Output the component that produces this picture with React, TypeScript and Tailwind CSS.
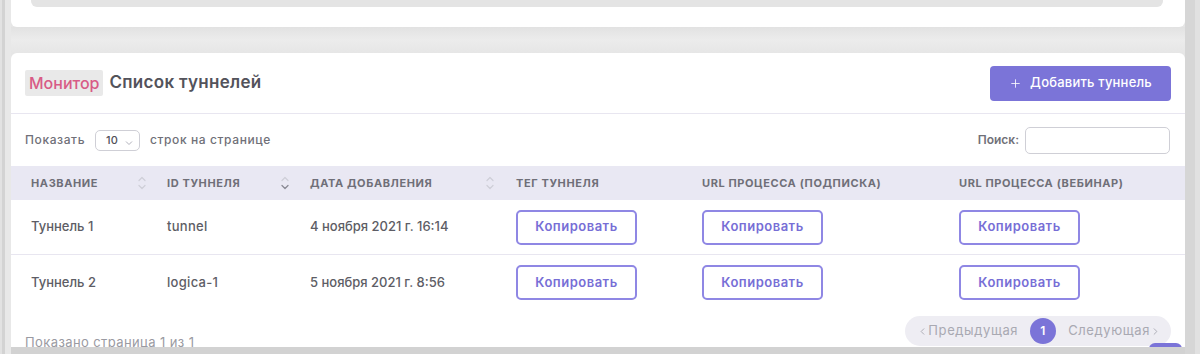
import { Plus, ChevronLeft, ChevronRight } from 'lucide-react';

const rows = [
  { name: 'Туннель 1', id: 'tunnel', date: '4 ноября 2021 г. 16:14' },
  { name: 'Туннель 2', id: 'logica-1', date: '5 ноября 2021 г. 8:56' },
];

const cols = 'grid grid-cols-[145px_143px_206px_186px_257px_237px]';

function SortIcon({ active }: { active?: 'up' | 'down' }) {
  return (
    <svg width="10" height="16" viewBox="0 0 10 16" fill="none" className="shrink-0">
      <path d="M2 5.5 L5 2.5 L8 5.5" stroke={active === 'up' ? '#8a8a94' : '#cfcfd8'} strokeWidth="1.3" strokeLinecap="round" strokeLinejoin="round" />
      <path d="M2 10.5 L5 13.5 L8 10.5" stroke={active === 'down' ? '#8a8a94' : '#cfcfd8'} strokeWidth="1.3" strokeLinecap="round" strokeLinejoin="round" />
    </svg>
  );
}

function CopyButton() {
  return (
    <button className="w-[121px] h-[35px] rounded-[5px] border-2 border-[#8f87e4] bg-white text-[13px] font-semibold tracking-[0.5px] text-[#776ed6]">
      Копировать
    </button>
  );
}

export default function App() {
  return (
    <div className="flex h-[354px] w-[1200px] overflow-hidden bg-[#e6e6e6] font-['Inter','Noto_Sans',sans-serif]">
      {/* left edge */}
      <div className="flex w-[11px] shrink-0">
        <div className="w-[2px] bg-[#e2e2e2]" />
        <div className="w-[3px] bg-[#d3d3d3]" />
        <div className="flex-1 bg-[#e8e8e8]" />
      </div>

      <div className="flex w-[1174px] shrink-0 flex-col">
        {/* top card */}
        <div className="h-[27px] shrink-0 rounded-b-[6px] bg-white px-[20px]">
          <div className="h-[7px] rounded-b-[6px] bg-[#e4e4e4] mr-[2px]" />
        </div>

        <div className="h-[26px] shrink-0 bg-gradient-to-b from-[#e2e2e2] via-[#ececec] to-[#e6e6e6]" />

        {/* main card */}
        <div className="relative h-[294px] shrink-0 overflow-hidden rounded-t-[6px] bg-white">
          <div className="flex h-[61px] items-center justify-between border-b border-[#e8e6f0] pl-[14px] pr-[14px]">
            <div className="flex items-center gap-[6px]">
              <span className="rounded-[2px] bg-[#e9e9e9] px-[4px] py-[1px] text-[16px] font-medium text-[#d85b86]">Монитор</span>
              <span className="text-[17px] font-semibold tracking-[0.3px] text-[#53535b]">Список туннелей</span>
            </div>
            <button className="flex h-[35px] w-[181px] items-center justify-center gap-[8px] rounded-[4px] bg-[#7b74d8] text-[13px] font-medium tracking-[0.2px] text-white">
              <Plus size={13} strokeWidth={1.5} />
              Добавить туннель
            </button>
          </div>

          <div className="flex h-[52px] items-center justify-between pl-[14px] pr-[15px]">
            <div className="flex items-center text-[12px] font-medium tracking-[0.6px] text-[#707078]">
              <span>Показать</span>
              <div className="ml-[10px] mr-[10px] flex h-[21px] w-[45px] items-center justify-between rounded-[5px] border border-[#cfcfd6] pl-[10px] pr-[6px] text-[11px] tracking-normal text-[#505058]">
                <span>10</span>
                <svg width="8" height="6" viewBox="0 0 8 6" className="mt-[6px]">
                  <path d="M1 1.5 L4 4.5 L7 1.5" stroke="#b0b0ba" strokeWidth="1" fill="none" />
                </svg>
              </div>
              <span>строк на странице</span>
            </div>
            <div className="flex items-center gap-[6px] text-[12px] font-semibold text-[#707078]">
              <span>Поиск:</span>
              <input className="h-[27px] w-[145px] rounded-[5px] border border-[#cfcfd6] outline-none" />
            </div>
          </div>

          <div className={`${cols} h-[34px] items-center bg-[#e9e8f3] text-[11px] font-bold uppercase tracking-[0.6px] text-[#6f6f78]`}>
            <div className="flex items-center justify-between pl-[20px] pr-[9px]">
              <span>Название</span>
              <SortIcon />
            </div>
            <div className="flex items-center justify-between pl-[11px] pr-[9px]">
              <span>ID туннеля</span>
              <SortIcon active="down" />
            </div>
            <div className="flex items-center justify-between pl-[11px] pr-[10px]">
              <span>Дата добавления</span>
              <SortIcon />
            </div>
            <div className="pl-[11px]">Тег туннеля</div>
            <div className="pl-[11px]">URL процесса (подписка)</div>
            <div className="pl-[11px]">URL процесса (вебинар)</div>
          </div>

          {rows.map((r, i) => (
            <div
              key={r.id}
              className={`${cols} h-[55px] items-center text-[13px] font-medium text-[#5d5d65] ${i === 0 ? 'border-b border-[#e8e6f0]' : ''}`}
            >
              <div className="pl-[20px]">{r.name}</div>
              <div className="pl-[11px] tracking-[0.3px]">{r.id}</div>
              <div className="pl-[11px]">{r.date}</div>
              <div className="pl-[11px]"><CopyButton /></div>
              <div className="pl-[11px]"><CopyButton /></div>
              <div className="pl-[11px]"><CopyButton /></div>
            </div>
          ))}

          <div className="mt-[6px] flex items-start justify-between pl-[14px] pr-[14px]">
            <span className="mt-[17px] text-[13px] tracking-[0.4px] text-[#9a9aa2]">Показано страница 1 из 1</span>
            <div className="flex h-[30px] items-center rounded-full bg-[#eeedf3] pl-[12px] pr-[10px] text-[13px] tracking-[0.6px] text-[#a9a9b2]">
              <span className="flex items-center"><ChevronLeft size={11} strokeWidth={2} />Предыдущая</span>
              <span className="mx-[12px] flex h-[26px] w-[26px] items-center justify-center rounded-full bg-[#7b74d8] text-[12px] font-semibold text-white">1</span>
              <span className="flex items-center">Следующая<ChevronRight size={11} strokeWidth={2} /></span>
            </div>
          </div>

          <div className="absolute bottom-[-30px] right-[3px] h-[34px] w-[33px] rounded-[6px] bg-[#7b74d8]" />
        </div>

        <div className="flex-1 bg-[#d2d2d2]" />
      </div>

      {/* right edge */}
      <div className="flex flex-1">
        <div className="w-[10px] bg-[#d6d6d6]" />
        <div className="flex-1 bg-[#e1e1e1]" />
      </div>
    </div>
  );
}
